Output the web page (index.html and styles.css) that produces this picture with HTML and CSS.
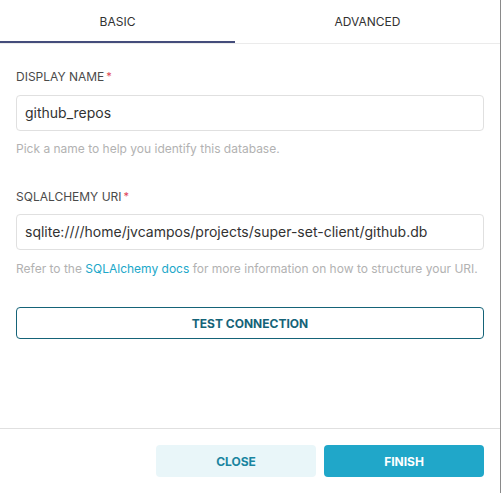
FILE: index.html
```
<!DOCTYPE html>
<html>
<head>
<meta charset="utf-8">
<link rel="stylesheet" href="styles.css">
</head>
<body>
<div class="panel">
  <div class="tabs">
    <div class="tab tab-basic active">BASIC</div>
    <div class="tab tab-advanced">ADVANCED</div>
  </div>
  <div class="content">
    <div class="label label-first">DISPLAY NAME<span class="req">*</span></div>
    <div class="input">github_repos</div>
    <div class="helper">Pick a name to help you identify this database.</div>
    <div class="label label-second">SQLALCHEMY URI<span class="req">*</span></div>
    <div class="input">sqlite:////home/jvcampos/projects/super-set-client/github.db</div>
    <div class="helper helper-second">Refer to the <a class="link">SQLAlchemy docs</a> for more information on how to structure your URI.</div>
    <button class="test-btn">TEST CONNECTION</button>
  </div>
  <div class="footer">
    <button class="btn btn-close">CLOSE</button>
    <button class="btn btn-finish">FINISH</button>
  </div>
</div>
</body>
</html>
```
FILE: styles.css
```
html, body {
  margin: 0;
  padding: 0;
  background: #ffffff;
}
body {
  font-family: Inter, "Liberation Sans", sans-serif;
  width: 501px;
  height: 493px;
  overflow: hidden;
}
.panel {
  width: 500px;
  height: 493px;
  border-right: 1px solid #8a8a8a;
  display: flex;
  flex-direction: column;
}
.tabs {
  display: flex;
  height: 43px;
  border-bottom: 1px solid #ebebeb;
}
.tab {
  height: 42px;
  line-height: 43px;
  text-align: center;
  font-size: 12px;
  color: #323232;
}
.tab-basic { width: 235px; }
.tab-advanced { width: 265px; }
.tab.active {
  box-shadow: 0 1px 0 #444d7b, inset 0 -1px 0 #444d7b;
}
.content {
  flex: 1;
  padding: 25px 16px 0 16px;
  display: flex;
  flex-direction: column;
}
.label {
  font-size: 12px;
  line-height: 16px;
  color: #4a4a4a;
}
.label-first { margin-bottom: 10px; }
.label-second { margin-top: 32px; margin-bottom: 9px; }
.req {
  color: #e04355;
  margin-left: 2px;
  font-size: 11px;
  position: relative;
  top: -1px;
}
.input {
  box-sizing: border-box;
  height: 36px;
  border: 1px solid #e0e0e0;
  border-radius: 4px;
  padding: 0 8px;
  font-size: 14px;
  line-height: 34px;
  color: #323232;
}
.helper {
  margin-top: 10px;
  font-size: 12px;
  line-height: 16px;
  color: #b2b2b2;
}
.helper-second { margin-top: 11px; }
.link {
  color: #20a7c9;
}
.test-btn {
  margin-top: 30px;
  height: 32px;
  box-sizing: border-box;
  border: 1px solid #156378;
  border-radius: 4px;
  background: #ffffff;
  color: #156378;
  font-family: Inter, "Liberation Sans", sans-serif;
  font-weight: 700;
  font-size: 12px;
  padding: 0;
}
.footer {
  border-top: 1px solid #e0e0e0;
  padding: 16px 16px 16px 0;
  display: flex;
  justify-content: flex-end;
  gap: 8px;
}
.btn {
  width: 160px;
  height: 32px;
  border: none;
  border-radius: 4px;
  font-family: Inter, "Liberation Sans", sans-serif;
  font-weight: 700;
  font-size: 12px;
  padding: 0;
}
.btn-close {
  background: #e9f6f9;
  color: #1a85a0;
}
.btn-finish {
  background: #20a7c9;
  color: #ffffff;
}
```
